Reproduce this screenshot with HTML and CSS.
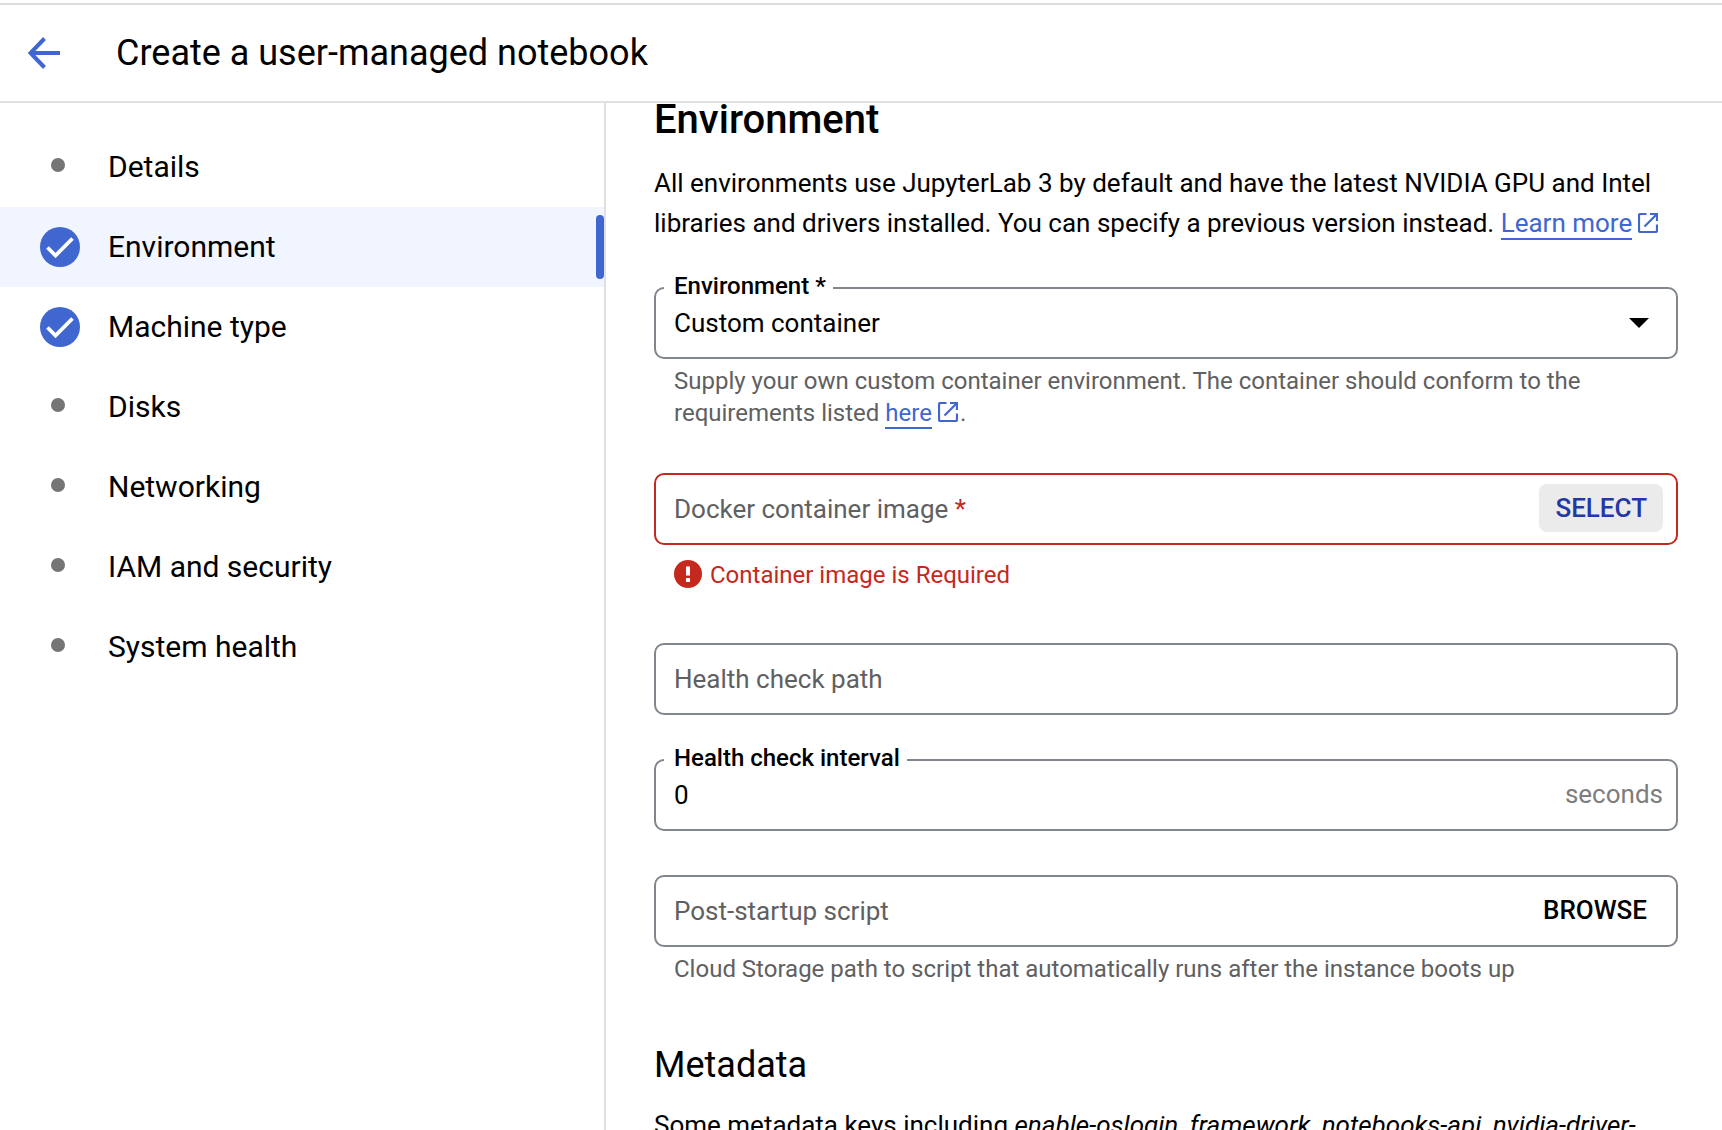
FILE: index.html
```html
<!DOCTYPE html>
<html lang="en">
<head>
<meta charset="utf-8">
<title>Create a user-managed notebook</title>
<link rel="stylesheet" href="styles.css">
</head>
<body>
<svg class="sprite" aria-hidden="true">
  <symbol id="check" viewBox="0 0 40 40">
    <circle cx="20" cy="20" r="20"/>
    <path d="M7.500 20.500 L15.500 28.500 L32.500 11.500" fill="none" stroke="#fff" stroke-width="3.800"/>
  </symbol>
  <symbol id="external" viewBox="0 0 20 20">
    <path d="M8.500 1H2.500A1.500 1.500 0 0 0 1 2.500V17.500A1.500 1.500 0 0 0 2.500 19H17.500A1.500 1.500 0 0 0 19 17.500V11.500M12 1H19V8M18.500 1.500L6.500 13.500" fill="none" stroke="currentColor" stroke-width="2.200"/>
  </symbol>
</svg>
<header class="topbar">
  <a class="back" href="#" aria-label="Back">
    <svg width="32" height="32" viewBox="0 0 32 32"><path d="M32 16H3M16.500 1.500L2.500 16L16.500 30.500" fill="none" stroke="currentColor" stroke-width="4"/></svg>
  </a>
  <h1 class="title">Create a user-managed notebook</h1>
</header>
<div class="layout">
  <nav class="steps">
    <a class="step" href="#"><span class="mark"><span class="dot"></span></span>Details</a>
    <a class="step active" href="#" aria-current="step"><span class="mark"><svg class="check"><use href="#check"/></svg></span>Environment</a>
    <a class="step" href="#"><span class="mark"><svg class="check"><use href="#check"/></svg></span>Machine type</a>
    <a class="step" href="#"><span class="mark"><span class="dot"></span></span>Disks</a>
    <a class="step" href="#"><span class="mark"><span class="dot"></span></span>Networking</a>
    <a class="step" href="#"><span class="mark"><span class="dot"></span></span>IAM and security</a>
    <a class="step" href="#"><span class="mark"><span class="dot"></span></span>System health</a>
  </nav>
  <main class="content">
    <h2 class="heading">Environment</h2>
    <p class="text">All environments use JupyterLab 3 by default and have the latest NVIDIA GPU and Intel libraries and drivers installed. You can specify a previous version instead. <a class="link" href="#"><span class="link-text">Learn more</span><svg class="external"><use href="#external"/></svg></a></p>

    <div class="field environment">
      <div class="box">
        <label class="floating" for="environment">Environment *</label>
        <select class="control" id="environment"><option>Custom container</option></select>
        <svg class="arrow" viewBox="0 0 20 10"><path d="M0 0H20L10 10Z"/></svg>
      </div>
      <p class="hint">Supply your own custom container environment. The container should conform to the requirements listed <a class="link" href="#"><span class="link-text">here</span><svg class="external"><use href="#external"/></svg></a>.</p>
    </div>

    <div class="field docker">
      <div class="box invalid">
        <label class="resting" for="image">Docker container image <span class="required">*</span></label>
        <input class="control" id="image" type="text" required>
        <button class="action pressed" type="button">SELECT</button>
      </div>
      <p class="error"><svg class="alert" viewBox="0 0 28 28"><circle cx="14" cy="14" r="14"/><path d="M12 6.500H16V15.500H12ZM12 18H16V22H12Z" fill="#fff"/></svg>Container image is Required</p>
    </div>

    <div class="field path">
      <div class="box">
        <label class="resting" for="path">Health check path</label>
        <input class="control" id="path" type="text">
      </div>
    </div>

    <div class="field">
      <div class="box">
        <label class="floating" for="interval">Health check interval</label>
        <input class="control" id="interval" type="text" value="0">
        <span class="suffix">seconds</span>
      </div>
    </div>

    <div class="field">
      <div class="box">
        <label class="resting" for="script">Post-startup script</label>
        <input class="control" id="script" type="text">
        <button class="action" type="button">BROWSE</button>
      </div>
      <p class="hint">Cloud Storage path to script that automatically runs after the instance boots up</p>
    </div>

    <h3 class="subheading">Metadata</h3>
    <p class="text">Some metadata keys including <em>enable-oslogin, framework, notebooks-api, nvidia-driver-</em></p>
  </main>
</div>
</body>
</html>
```

FILE: styles.css
```css
* {
  box-sizing: border-box;
}

body {
  margin: 0;
  padding-top: 3px;
  height: 100vh;
  display: flex;
  flex-direction: column;
  overflow: hidden;
  background: #fff;
  color: #000;
  font-family: Roboto, sans-serif;
  font-size: 26px;
}

h1, h2, h3, p {
  margin: 0;
}

.sprite {
  display: none;
}

.topbar {
  flex: none;
  display: flex;
  align-items: center;
  gap: 56px;
  height: 100px;
  padding-left: 28px;
  border-top: 2px solid #dadce0;
  border-bottom: 2px solid #e0e0e0;
}

.back {
  display: flex;
  color: #4066d0;
}

.title {
  font-size: 36px;
  line-height: 48px;
  font-weight: 400;
}

.layout {
  flex: 1;
  min-height: 0;
  display: flex;
}

.steps {
  flex: none;
  width: 606px;
  padding-top: 24px;
  border-right: 2px solid #e0e0e0;
}

.step {
  position: relative;
  display: flex;
  align-items: center;
  gap: 28px;
  height: 80px;
  padding-left: 40px;
  color: inherit;
  font-size: 30px;
  line-height: 40px;
  text-decoration: none;
}

.active {
  background: #f0f5ff;
}

.active::after {
  content: "";
  position: absolute;
  top: 8px;
  right: 0;
  width: 8px;
  height: 64px;
  border-radius: 4px;
  background: #4066d0;
}

.mark {
  width: 40px;
  height: 40px;
}

.check {
  display: block;
  width: 40px;
  height: 40px;
  fill: #4066d0;
}

.dot {
  display: block;
  width: 14px;
  height: 14px;
  margin: 11px;
  border-radius: 50%;
  background: #757575;
}

.content {
  flex: 1;
  min-width: 0;
  padding: 0 44px 0 48px;
  overflow: auto;
  scrollbar-width: none;
}

.heading {
  margin-bottom: 26px;
  font-size: 40px;
  line-height: 34px;
  font-weight: 500;
}

.text {
  line-height: 40px;
}

.link {
  color: #4066d0;
  text-decoration: none;
  white-space: nowrap;
}

.link-text {
  border-bottom: 2px solid #4066d0;
}

.external {
  width: 20px;
  height: 20px;
  margin: 0 2px 0 6px;
  vertical-align: -1px;
}

.field {
  margin-top: 44px;
}

.box {
  position: relative;
  display: flex;
  align-items: center;
  height: 72px;
  padding: 0 13px 0 18px;
  border: 2px solid #80868b;
  border-radius: 10px;
}

.invalid {
  border-color: #c5281c;
}

.control {
  flex: 1;
  min-width: 0;
  height: 100%;
  padding: 0;
  border: 0;
  outline: 0;
  appearance: none;
  background: none;
  color: inherit;
  font: inherit;
}

.floating {
  position: absolute;
  top: -19px;
  left: 8px;
  padding: 0 7px 0 10px;
  background: #fff;
  font-size: 24px;
  line-height: 32px;
  font-weight: 500;
}

.resting {
  position: absolute;
  left: 18px;
  color: #5f6061;
}

.required {
  color: #c5281c;
}

.suffix {
  margin-bottom: 2px;
  color: #7d7d7d;
}

.arrow {
  width: 20px;
  height: 10px;
  margin-right: 14px;
}

.action {
  height: 48px;
  margin-bottom: 2px;
  padding: 0 16px;
  border: 0;
  border-radius: 8px;
  background: none;
  color: inherit;
  font: inherit;
  font-weight: 500;
}

.pressed {
  background: #ebebeb;
  color: #2338a5;
}

.hint,
.error {
  margin: 6px 20px 0;
  color: #5f6061;
  font-size: 24px;
  line-height: 32px;
}

.error {
  display: flex;
  align-items: center;
  gap: 8px;
  margin-top: 14px;
  color: #c5281c;
}

.alert {
  width: 28px;
  height: 28px;
  margin-bottom: 2px;
  fill: #c5281c;
}

.path {
  margin-top: 52px;
}

.subheading {
  margin: 60px 0 20px;
  font-size: 36px;
  line-height: 40px;
  font-weight: 400;
}
```
